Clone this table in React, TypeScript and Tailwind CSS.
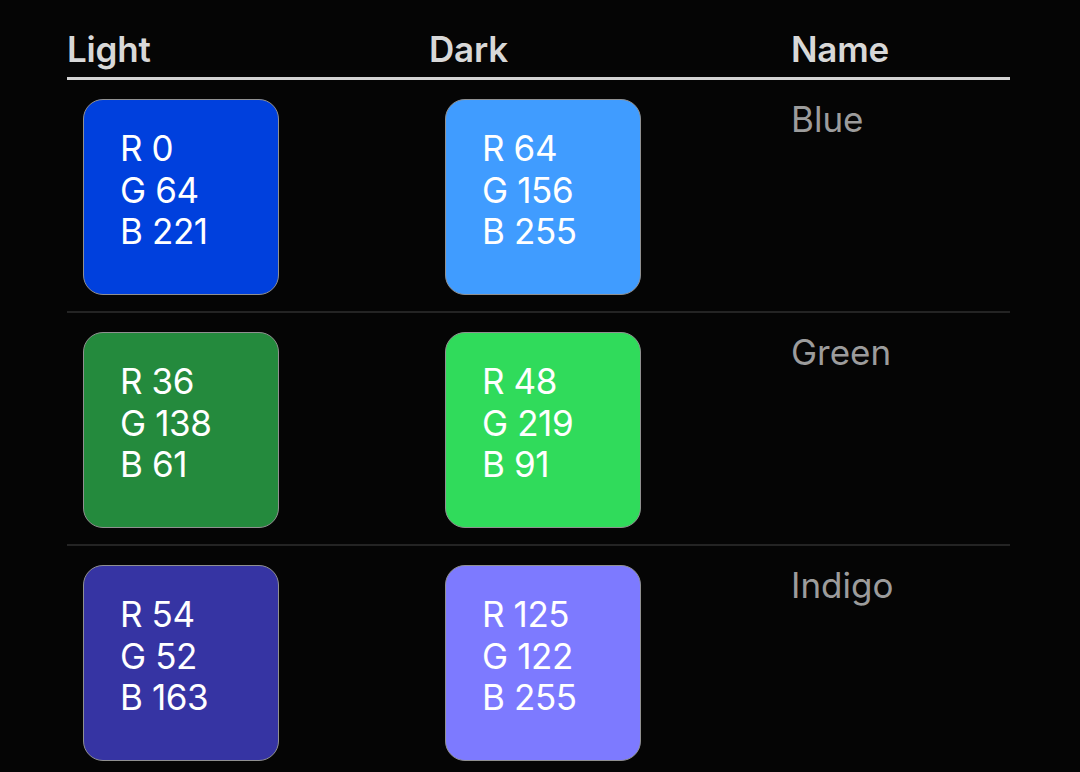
const rows = [
  { name: "Blue", light: { bg: "bg-[#0040dd]", r: 0, g: 64, b: 221 }, dark: { bg: "bg-[#409cff]", r: 64, g: 156, b: 255 } },
  { name: "Green", light: { bg: "bg-[#248a3d]", r: 36, g: 138, b: 61 }, dark: { bg: "bg-[#30db5b]", r: 48, g: 219, b: 91 } },
  { name: "Indigo", light: { bg: "bg-[#3634a3]", r: 54, g: 52, b: 163 }, dark: { bg: "bg-[#7d7aff]", r: 125, g: 122, b: 255 } },
];

type Swatch = { bg: string; r: number; g: number; b: number };

function ColorSwatch({ c }: { c: Swatch }) {
  return (
    <div className={`${c.bg} w-[196px] h-[196px] rounded-[20px] border border-[#909090] pl-[36px] pt-[28px] text-white text-[35px] leading-[41.5px] tracking-[-0.4px]`}>
      <div>R {c.r}</div>
      <div>G {c.g}</div>
      <div>B {c.b}</div>
    </div>
  );
}

export default function App() {
  return (
    <div className="w-[1080px] h-[772px] bg-[#050505] overflow-hidden" style={{ fontFamily: "Inter, 'Noto Sans', sans-serif" }}>
      <div className="ml-[67px] w-[943px] pt-[28px]">
        <div className="grid grid-cols-[362px_362px_219px] pb-[7px] text-[35px] leading-[42px] font-semibold text-[#d8d8d8] tracking-[-0.2px]">
          <div>Light</div>
          <div>Dark</div>
          <div>Name</div>
        </div>
        <div className="h-[3px] bg-[#d4d4d4]" />
        {rows.map((row, i) => (
          <div key={row.name}>
            {i > 0 && <div className="h-[2px] bg-[#242424]" />}
            <div className="grid grid-cols-[362px_362px_219px] pt-[19px] pb-[16px] items-start">
              <div className="pl-[16px]">
                <ColorSwatch c={row.light} />
              </div>
              <div className="pl-[16px]">
                <ColorSwatch c={row.dark} />
              </div>
              <div className="text-[35px] leading-[42px] text-[#9c9c9c] -mt-[1px]">{row.name}</div>
            </div>
          </div>
        ))}
      </div>
    </div>
  );
}
